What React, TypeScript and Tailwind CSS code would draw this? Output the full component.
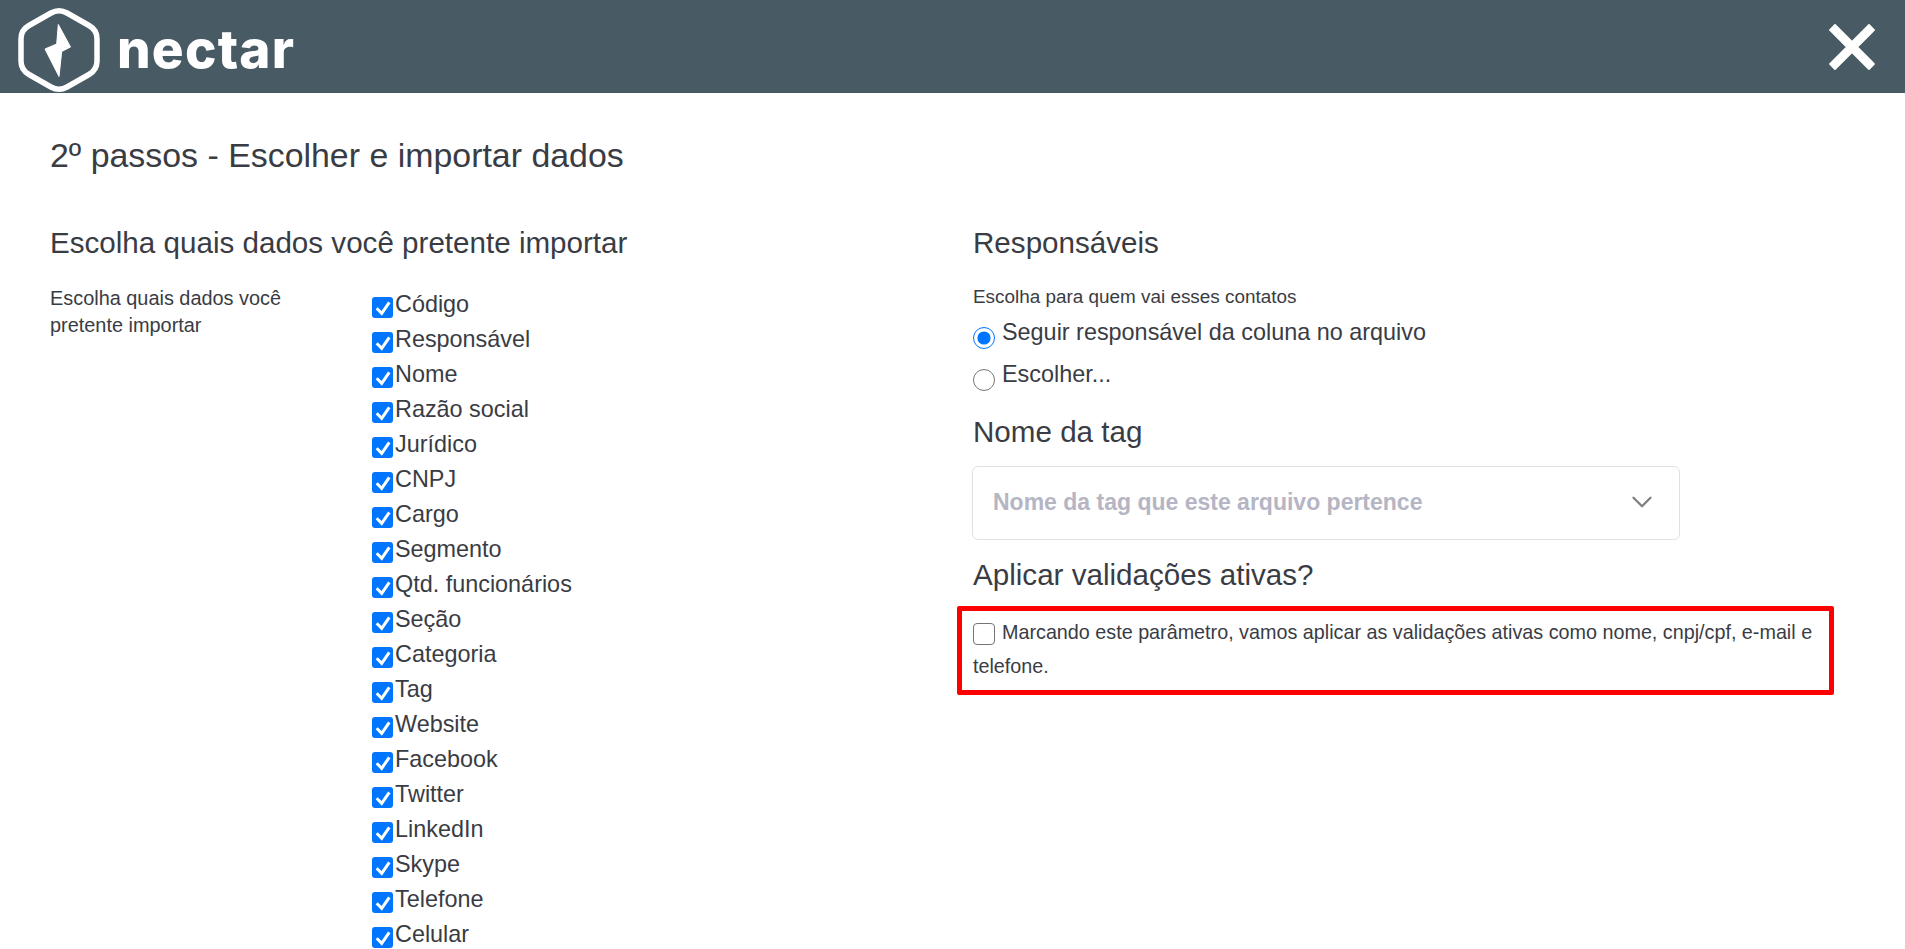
import { ChevronDown } from "lucide-react";

const fields = [
  "Código",
  "Responsável",
  "Nome",
  "Razão social",
  "Jurídico",
  "CNPJ",
  "Cargo",
  "Segmento",
  "Qtd. funcionários",
  "Seção",
  "Categoria",
  "Tag",
  "Website",
  "Facebook",
  "Twitter",
  "LinkedIn",
  "Skype",
  "Telefone",
  "Celular",
];

function Logo() {
  return (
    <div className="mt-[6px] flex items-center gap-[16px]">
      <svg width="84" height="86" viewBox="0 0 84 86" fill="none">
        <path
          d="M34 6 Q42 1.5 50 6 L72 18.5 Q80 23 80 32 L80 54 Q80 63 72 67.5 L50 80 Q42 84.5 34 80 L12 67.5 Q4 63 4 54 L4 32 Q4 23 12 18.5 Z"
          stroke="white"
          strokeWidth="5.5"
          strokeLinejoin="round"
        />
        <path
          d="M41.3 17.5 L53.5 40 L44.7 44.5 L42 69.5 L28 42 L39.7 37 Z"
          fill="white"
          stroke="white"
          strokeWidth="1"
          strokeLinejoin="round"
        />
      </svg>
      <span className="font-['Inter',sans-serif] text-[53px] font-extrabold leading-none tracking-[1.2px] text-white">nectar</span>
    </div>
  );
}

function CheckedBox() {
  return (
    <span className="mr-[2px] mt-[11px] flex h-[21px] w-[21px] shrink-0 items-center justify-center rounded-[3px] bg-[#0075ff]">
      <svg width="21" height="21" viewBox="0 0 21 21" fill="none">
        <path d="M4.7 11.3 L9.7 16.3 L17.3 5.3" stroke="white" strokeWidth="3" />
      </svg>
    </span>
  );
}

export default function App() {
  return (
    <div className="flex h-screen flex-col overflow-hidden bg-white font-['Liberation_Sans',Arial,sans-serif] text-[#3a3c44]">
      {/* header */}
      <div className="flex h-[93px] shrink-0 items-center justify-between bg-[#485a64] pl-[17px] pr-[30px]">
        <Logo />
        <svg width="46" height="46" viewBox="0 0 46 46">
          <path d="M6 6 L40 40 M40 6 L6 40" stroke="white" strokeWidth="9" strokeLinecap="square" />
        </svg>
      </div>

      <div className="px-[50px] pt-[38px]">
        <h1 className="text-[33.9px] font-normal leading-[48px]">2º passos - Escolher e importar dados</h1>

        <div className="mt-[46px] flex">
          {/* coluna esquerda */}
          <div className="w-[923px] shrink-0">
            <h2 className="text-[29.6px] leading-[36px]">Escolha quais dados você pretente importar</h2>
            <div className="mt-[22px] flex">
              <p className="w-[322px] shrink-0 pt-[2px] text-[19.9px] leading-[27px]">
                Escolha quais dados você
                <br />
                pretente importar
              </p>
              <div className="flex flex-col pt-[3px]">
                {fields.map((field) => (
                  <div key={field} className="flex h-[35px] items-start text-[23.4px] leading-[36px]">
                    <CheckedBox />
                    {field}
                  </div>
                ))}
              </div>
            </div>
          </div>

          {/* coluna direita */}
          <div className="flex-1">
            <h2 className="text-[29.6px] leading-[36px]">Responsáveis</h2>
            <p className="mt-[21px] text-[18.9px] leading-[29px]">Escolha para quem vai esses contatos</p>
            <label className="flex h-[42px] items-start pt-[3px] text-[23.4px] leading-[36px]">
              <input type="radio" name="resp" defaultChecked className="h-[22px] w-[22px]" style={{ margin: "13px 7px 0 0" }} />
              Seguir responsável da coluna no arquivo
            </label>
            <label className="flex h-[42px] items-start pt-[3px] text-[23.4px] leading-[36px]">
              <input type="radio" name="resp" className="h-[22px] w-[22px]" style={{ margin: "13px 7px 0 0" }} />
              Escolher...
            </label>
            <h2 className="mt-[19px] text-[29.6px] leading-[36px]">Nome da tag</h2>
            <div className="-ml-[1px] mt-[16px] flex h-[74px] w-[708px] items-center justify-between rounded-[6px] border border-[#dee2e6] pb-[2px] pl-[20px] pr-[20px]">
              <span className="text-[23px] font-bold text-[#b5b5c3]">Nome da tag que este arquivo pertence</span>
              <ChevronDown size={34} strokeWidth={1.6} className="text-[#7e7e7e]" />
            </div>
            <h2 className="mt-[17px] text-[29.6px] leading-[36px]">Aplicar validações ativas?</h2>
            <div className="-ml-[16px] mt-[13px] w-[877px] rounded-[2px] border-[5px] border-[#ff0000] pb-[7px] pl-[11px] pr-[4px] pt-[4px] text-[19.75px] leading-[34px]">
              <input
                type="checkbox"
                className="h-[22px] w-[22px] appearance-none rounded-[4px] border-[1.5px] border-[#767676] bg-white align-middle"
                style={{ margin: "0 7px 0 0" }}
              />
              Marcando este parâmetro, vamos aplicar as validações ativas como nome, cnpj/cpf, e-mail e telefone.
            </div>
          </div>
        </div>
      </div>
    </div>
  );
}
